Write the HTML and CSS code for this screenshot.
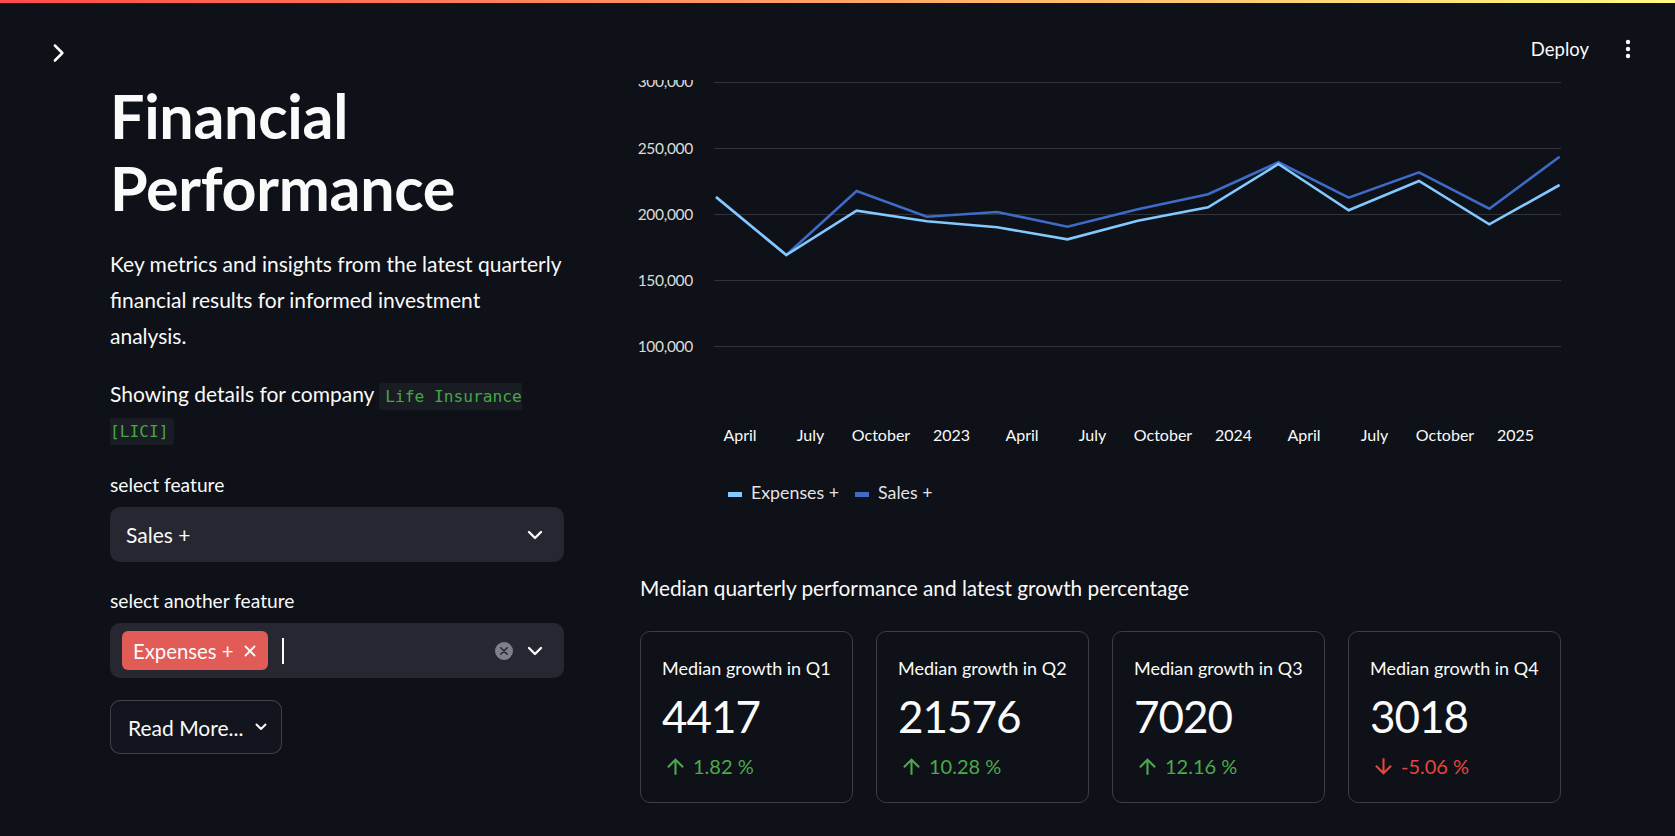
FILE: index.html
```html
<!DOCTYPE html>
<html lang="en">
<head>
<meta charset="utf-8">
<title>Financial Performance</title>
<link rel="stylesheet" href="styles.css">
</head>
<body>
<div class="decoration"></div>
<header class="topbar">
  <button class="sidebar-toggle" aria-label="Open sidebar">
    <svg width="30" height="30" viewBox="0 0 24 24"><path d="M9.5 6l6 6-6 6" fill="none" stroke="#fafafa" stroke-width="2" stroke-linecap="round" stroke-linejoin="round"/></svg>
  </button>
  <div class="toolbar">
    <span class="deploy">Deploy</span>
    <span class="kebab">
      <svg width="20" height="20" viewBox="0 0 20 20"><circle cx="10" cy="3" r="2.2" fill="#fafafa"/><circle cx="10" cy="10" r="2.2" fill="#fafafa"/><circle cx="10" cy="17" r="2.2" fill="#fafafa"/></svg>
    </span>
  </div>
</header>
<main class="main">
  <section class="left">
    <h1 class="title">Financial Performance</h1>
    <p class="lead">Key metrics and insights from the latest quarterly financial results for informed investment<br>analysis.</p>
    <p class="company">Showing details for company <code class="code">Life Insurance [LICI]</code></p>
    <div class="widget">
      <div class="label">select feature</div>
      <div class="select">
        <span class="select-value">Sales +</span>
        <svg class="chev" width="16" height="10" viewBox="0 0 16 10"><path d="M2 2l6 6 6-6" fill="none" stroke="#fafafa" stroke-width="2.4" stroke-linecap="round" stroke-linejoin="round"/></svg>
      </div>
    </div>
    <div class="widget">
      <div class="label">select another feature</div>
      <div class="select multi">
        <span class="tag">Expenses +<svg class="tag-x" width="12" height="12" viewBox="0 0 12 12"><path d="M1.5 1.5l9 9M10.5 1.5l-9 9" stroke="#fafafa" stroke-width="1.8" stroke-linecap="round"/></svg></span>
        <span class="caret"></span>
        <span class="clear"><svg width="18" height="18" viewBox="0 0 18 18"><circle cx="9" cy="9" r="9" fill="#7d808a"/><path d="M5.8 5.8l6.4 6.4M12.2 5.8l-6.4 6.4" stroke="#262730" stroke-width="1.6" stroke-linecap="round"/></svg></span>
        <svg class="chev" width="16" height="10" viewBox="0 0 16 10"><path d="M2 2l6 6 6-6" fill="none" stroke="#fafafa" stroke-width="2.4" stroke-linecap="round" stroke-linejoin="round"/></svg>
      </div>
    </div>
    <button class="readmore">Read More...<svg width="12" height="8" viewBox="0 0 12 8"><path d="M1.5 1.5l4.5 4.5 4.5-4.5" fill="none" stroke="#fafafa" stroke-width="2" stroke-linecap="round" stroke-linejoin="round"/></svg></button>
  </section>
  <section class="right">
    <div class="chart">
      <svg class="plot" width="921" height="380" viewBox="0 0 921 380">
        <defs><clipPath id="plotclip"><rect x="-30" y="0" width="960" height="380"/></clipPath></defs>
        <g clip-path="url(#plotclip)">
          <g stroke="#31333b" stroke-width="1">
            <line x1="74" x2="921" y1="2.5" y2="2.5"/>
            <line x1="74" x2="921" y1="68.5" y2="68.5"/>
            <line x1="74" x2="921" y1="134.5" y2="134.5"/>
            <line x1="74" x2="921" y1="200.5" y2="200.5"/>
            <line x1="74" x2="921" y1="266.5" y2="266.5"/>
          </g>
          <g class="ylab" text-anchor="end">
            <text x="53" y="7">300,000</text>
            <text x="53" y="74">250,000</text>
            <text x="53" y="140">200,000</text>
            <text x="53" y="206">150,000</text>
            <text x="53" y="272">100,000</text>
          </g>
          <polyline fill="none" stroke="#3e6bc8" stroke-width="2.6" stroke-linejoin="miter" points="76,117 146.3,175 216.6,111 286.9,136.7 357.2,132 427.5,146.7 497.8,129.3 568.1,114.3 638.4,82.3 708.7,117.7 779,92.3 849.3,128.7 919.6,76.7"/>
          <polyline fill="none" stroke="#83c9ff" stroke-width="2.6" stroke-linejoin="miter" points="76,117 146.3,175 216.6,130.7 286.9,141.3 357.2,147.3 427.5,159.3 497.8,140.7 568.1,127.3 638.4,84 708.7,130.3 779,101 849.3,144.3 919.6,105"/>
          <g class="xlab" text-anchor="middle">
            <text x="100" y="361">April</text>
            <text x="170.5" y="361">July</text>
            <text x="241" y="361">October</text>
            <text x="311.5" y="361">2023</text>
            <text x="382" y="361">April</text>
            <text x="452.5" y="361">July</text>
            <text x="523" y="361">October</text>
            <text x="593.5" y="361">2024</text>
            <text x="664" y="361">April</text>
            <text x="734.5" y="361">July</text>
            <text x="805" y="361">October</text>
            <text x="875.5" y="361">2025</text>
          </g>
        </g>
      </svg>
      <div class="legend">
        <span class="swatch swatch-exp"></span><span class="legend-text">Expenses +</span>
        <span class="swatch swatch-sales"></span><span class="legend-text">Sales +</span>
      </div>
    </div>
    <p class="subhead">Median quarterly performance and latest growth percentage</p>
    <div class="cards">
      <div class="card">
        <div class="card-label">Median growth in Q1</div>
        <div class="card-value">4417</div>
        <div class="delta up"><svg width="25" height="25" viewBox="0 0 24 24"><path d="M4 12l1.41 1.41L11 7.83V20h2V7.83l5.58 5.59L20 12l-8-8-8 8z" fill="currentColor"/></svg>1.82 %</div>
      </div>
      <div class="card">
        <div class="card-label">Median growth in Q2</div>
        <div class="card-value">21576</div>
        <div class="delta up"><svg width="25" height="25" viewBox="0 0 24 24"><path d="M4 12l1.41 1.41L11 7.83V20h2V7.83l5.58 5.59L20 12l-8-8-8 8z" fill="currentColor"/></svg>10.28 %</div>
      </div>
      <div class="card">
        <div class="card-label">Median growth in Q3</div>
        <div class="card-value">7020</div>
        <div class="delta up"><svg width="25" height="25" viewBox="0 0 24 24"><path d="M4 12l1.41 1.41L11 7.83V20h2V7.83l5.58 5.59L20 12l-8-8-8 8z" fill="currentColor"/></svg>12.16 %</div>
      </div>
      <div class="card">
        <div class="card-label">Median growth in Q4</div>
        <div class="card-value">3018</div>
        <div class="delta down"><svg width="25" height="25" viewBox="0 0 24 24"><path d="M20 12l-1.41-1.41L13 16.17V4h-2v12.17l-5.58-5.59L4 12l8 8 8-8z" fill="currentColor"/></svg>-5.06 %</div>
      </div>
    </div>
  </section>
</main>
</body>
</html>
```
FILE: styles.css
```css
* { box-sizing: border-box; }
html, body {
  margin: 0;
  padding: 0;
  background: #0e1117;
  color: #fafafa;
  font-family: Lato, "Noto Sans", sans-serif;
  width: 1675px;
  height: 836px;
  overflow: hidden;
}
.decoration {
  height: 3px;
  background: linear-gradient(90deg, #ff4b4b, #fffd80);
}
.topbar {
  height: 77px;
  display: flex;
  align-items: flex-start;
}
.sidebar-toggle {
  margin: 35px 0 0 43px;
  padding: 0;
  border: 0;
  background: none;
  width: 30px;
  height: 30px;
  display: block;
}
.sidebar-toggle svg { display: block; }
.toolbar {
  margin: 33px 37px 0 auto;
  height: 26px;
  display: flex;
  align-items: center;
  gap: 29px;
}
.deploy {
  font-size: 18.5px;
  line-height: 26px;
}
.kebab svg { display: block; }

.main {
  display: flex;
  gap: 76px;
  padding: 0 114px 0 110px;
}
.left {
  width: 454px;
  flex: none;
  display: flex;
  flex-direction: column;
  gap: 22px;
  align-items: flex-start;
}
.right {
  width: 921px;
  flex: none;
}
.title {
  margin: 0;
  font-size: 61px;
  line-height: 72px;
  font-weight: 700;
  letter-spacing: -0.3px;
}
.lead, .company {
  margin: 0;
  font-size: 21px;
  line-height: 36px;
}
.company { line-height: 35px; }
.code {
  font-family: "DejaVu Sans Mono", "Liberation Mono", monospace;
  font-size: 16.2px;
  line-height: 1;
  color: #45a745;
  background: #1a1c24;
  padding: 4px 6px;
  border-radius: 4px;
}
.widget {
  width: 100%;
}
.label {
  height: 33.6px;
  margin-bottom: 5.6px;
  display: flex;
  align-items: center;
  font-size: 19.2px;
}
.select {
  height: 55px;
  border-radius: 10px;
  background: #262730;
  display: flex;
  align-items: center;
  padding: 0 21px 0 16px;
}
.select-value {
  font-size: 21px;
  flex: 1;
}
.chev { display: block; flex: none; }
.multi { padding-left: 12px; }
.tag {
  height: 39px;
  background: #e25c57;
  border-radius: 6px;
  display: flex;
  align-items: center;
  padding: 0 12px 0 11px;
  font-size: 20.3px;
  gap: 11px;
}
.tag-x { display: block; }
.caret {
  width: 1.5px;
  height: 26px;
  background: #fafafa;
  margin-left: 14px;
}
.clear {
  margin-left: auto;
  margin-right: 14px;
}
.clear svg { display: block; }
.readmore {
  height: 54px;
  width: 172px;
  border: 1px solid rgba(250, 250, 250, 0.2);
  border-radius: 10px;
  background: #12151d;
  color: #fafafa;
  font-family: inherit;
  font-size: 21px;
  display: flex;
  align-items: center;
  padding: 0 0 0 17px;
  gap: 12px;
}
.readmore svg { display: block; }

.chart { height: 426.5px; }
.plot { display: block; overflow: visible; }
.ylab text {
  font-size: 15.5px;
  letter-spacing: -0.3px;
  fill: rgba(250, 250, 250, 0.88);
  font-family: Lato, sans-serif;
}
.xlab text {
  font-size: 16px;
  fill: #fafafa;
  font-family: Lato, sans-serif;
}
.legend {
  margin-top: 16.5px;
  height: 30px;
  display: flex;
  align-items: center;
  padding-left: 88px;
  font-size: 17.8px;
  line-height: 30px;
  color: rgba(250, 250, 250, 0.92);
}
.swatch {
  width: 14px;
  height: 5px;
  margin-top: 6px;
  margin-right: 9px;
}
.swatch-exp { background: #83c9ff; }
.swatch-sales { background: #3f6ac5; margin-left: 16px; }
.subhead {
  margin: 63.5px 0 25px;
  font-size: 20.8px;
  line-height: 36px;
}
.cards {
  display: grid;
  grid-template-columns: repeat(4, 1fr);
  gap: 23px;
}
.card {
  border: 1px solid #3c3e46;
  border-radius: 10px;
  padding: 23px 8px 22px 21px;
}
.card-label {
  font-size: 18px;
  line-height: 26px;
  white-space: nowrap;
}
.card-value {
  margin-top: 7px;
  font-size: 44px;
  line-height: 56px;
  letter-spacing: -1px;
}
.delta {
  margin-top: 8px;
  height: 28px;
  display: flex;
  align-items: center;
  gap: 5px;
  font-size: 20px;
  line-height: 28px;
}
.delta svg { display: block; margin-left: 1px; }
.up { color: #4caa4c; }
.down { color: #e8453c; }
```
